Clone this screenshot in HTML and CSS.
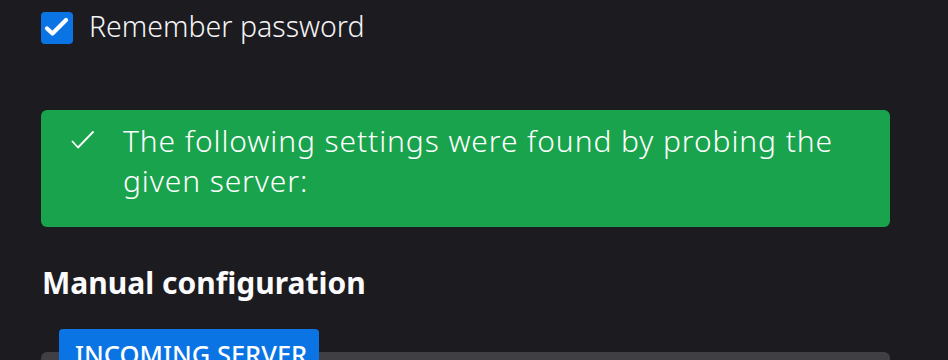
FILE: index.html
```html
<!DOCTYPE html>
<html lang="en">
<head>
<meta charset="utf-8">
<link rel="stylesheet" href="styles.css">
</head>
<body>
<main class="page">
  <label class="remember">
    <span class="checkbox">
      <svg viewBox="0 0 32 32" width="32" height="32"><path d="M6 16.5 L11.5 21.5 L25 8" fill="none" stroke="#fff" stroke-width="4.2" stroke-linecap="round" stroke-linejoin="round"/></svg>
    </span>
    <span class="remember-text">Remember password</span>
  </label>

  <div class="notice">
    <svg class="notice-icon" viewBox="0 0 24 20" width="24" height="20"><path d="M1.5 10.5 L7 16.5 L22 1" fill="none" stroke="#fff" stroke-width="1.8" stroke-linecap="round" stroke-linejoin="round"/></svg>
    <p class="notice-text">The following settings were found by probing the given server:</p>
  </div>

  <h2 class="heading">Manual configuration</h2>

  <section class="fieldset">
    <span class="legend">INCOMING SERVER</span>
  </section>
</main>
</body>
</html>
```

FILE: styles.css
```css
html, body {
  margin: 0;
  padding: 0;
  background: #1c1b1f;
  height: 100%;
  overflow: hidden;
}
body {
  font-family: "Noto Sans", "Open Sans", sans-serif;
  color: #f4f4f6;
}
.page {
  width: 849px;
  padding: 12px 0 0 41px;
  display: flex;
  flex-direction: column;
}
.remember {
  display: flex;
  align-items: center;
  gap: 16px;
  height: 32px;
}
.checkbox {
  width: 32px;
  height: 32px;
  border-radius: 4px;
  background: #0b74e4;
  display: flex;
}
.remember-text {
  font-size: 28.5px;
  font-weight: 300;
  line-height: 32px;
  margin-top: -5px;
}
.notice {
  margin-top: 66px;
  background: #19a34c;
  border-radius: 6px;
  height: 117px;
  box-sizing: border-box;
  display: flex;
  align-items: flex-start;
  padding: 11px 0 0 30px;
  gap: 28px;
}
.notice-icon {
  margin-top: 10px;
  flex: none;
}
.notice-text {
  margin: 0;
  font-size: 30px;
  font-weight: 300;
  letter-spacing: 0.9px;
  line-height: 40px;
  width: 760px;
  color: #fff;
}
.heading {
  margin: 36px 0 0 1px;
  font-size: 30px;
  font-weight: 700;
  line-height: 40px;
  color: #fbfbfe;
}
.fieldset {
  margin-top: 49px;
  background: #404044;
  border-radius: 6px 6px 0 0;
  height: 40px;
  position: relative;
}
.legend {
  position: absolute;
  left: 18px;
  top: -23px;
  background: #0b74e4;
  color: #fff;
  border-radius: 4px;
  padding: 0 16px;
  height: 40px;
  width: 260px;
  box-sizing: border-box;
  font-size: 25.5px;
  font-weight: 500;
  line-height: 50px;
  overflow: hidden;
  white-space: nowrap;
}
```
